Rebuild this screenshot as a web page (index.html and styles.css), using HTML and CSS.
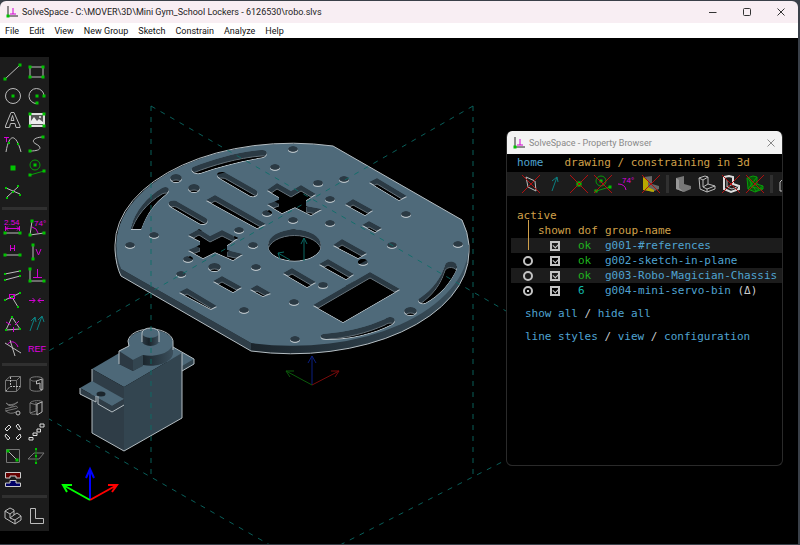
FILE: index.html
```html
<!DOCTYPE html>
<html lang="en">
<head>
  <meta charset="UTF-8">
  <title>SolveSpace</title>
  <link rel="stylesheet" href="styles.css">
</head>
<body>
  <div id="app">
    <header class="title-bar">
      <svg class="logo" viewBox="0 0 12 12"><path class="k" d="M2 0V10H12"/><path class="m" d="M4 8H10M7 8V2"/><path class="dot" d="M2 10h0"/></svg>
      <h1>SolveSpace - C:\MOVER\3D\Mini Gym_School Lockers - 6126530\robo.slvs</h1>
      <div class="window-buttons">
        <button title="Minimize"><svg viewBox="0 0 10 10"><path d="M1 5.500H8.500"/></svg></button>
        <button title="Maximize"><svg viewBox="0 0 10 10"><rect x="1.500" y="1.500" width="7" height="7" rx="1"/></svg></button>
        <button title="Close"><svg viewBox="0 0 10 10"><path d="M1.500 1.500L8.500 8.500M8.500 1.500L1.500 8.500"/></svg></button>
      </div>
    </header>

    <nav class="menu-bar">
      <button>File</button>
      <button>Edit</button>
      <button>View</button>
      <button>New Group</button>
      <button>Sketch</button>
      <button>Constrain</button>
      <button>Analyze</button>
      <button>Help</button>
    </nav>

    <main id="viewport">
      <svg id="scene" viewBox="0 38 798 506" preserveAspectRatio="xMinYMin slice">
        <defs>
          <linearGradient id="rim" gradientUnits="userSpaceOnUse" x1="251" y1="0" x2="470" y2="0">
            <stop offset="0" stop-color="#1b252c"/>
            <stop offset="1" stop-color="#3b505d"/>
          </linearGradient>
          <linearGradient id="horn">
            <stop offset="0" stop-color="#2c3a44"/>
            <stop offset=".4" stop-color="#19232a"/>
            <stop offset="1" stop-color="#3b4f5c"/>
          </linearGradient>
          <!-- every opening in the chassis plate -->
          <path id="openings" d="
            M193 167C213 159 238 152 261 150C268 149 269 155 263 157C240 161 220 166 200 173C194 174 189 170 193 167Z
            M131 227C135 211 147 197 162 188C168 185 172 190 166 194C154 203 147 213 141 229H131Z
            M445 265C446 260 458 260 457 268C450 283 440 295 425 303C419 304 416 300 420 298C433 289 441 278 445 265Z
            M323 334C347 332 367 327 385 319C392 314 399 320 392 324C374 333 350 339 326 339C320 339 319 335 323 334Z
            M218 177C214 172 223 171 226 173L256 190C261 195 253 198 249 195Z
            M170 206C165 201 174 199 178 202L206 218C211 222 203 226 199 223Z
            M206 200L215 195L266 224L257 228Z
            M188 235L199 229L210 236L222 230L238 238L227 245V250L243 254L233 260L215 252L203 258L188 250L200 245V241Z
            M267 190L277 183L291 191L301 185L316 194L306 200V206L322 209L311 215L295 207L282 213L267 204L279 200V197Z
            M369 182L377 178L407 196L399 200Z
            M345 204L353 199L373 210L365 215Z
            M362 225L369 221L382 228L375 232Z
            M333 245L342 239L367 253L358 258Z
            M319 264L328 259L354 274L346 279Z
            M283 273L292 268L316 282L307 287Z
            M213 281L222 276L242 287L233 292Z
            M250 289L257 285L271 293L263 296Z
            M179 292L187 288L217 306L211 309Z
            M313 305L370 272L400 289L343 322Z
            M268 245a26.500 15.500 0 0 1 53 0a26.500 15.500 0 0 1 -53 0Z
            M170 178a6 4 0 0 1 12 0a6 4 0 0 1 -12 0Z
            M188 188a6 4 0 0 1 12 0a6 4 0 0 1 -12 0Z
            M208 267a6.500 4 0 0 1 13 0a6.500 4 0 0 1 -13 0Z
            M404 311a6.500 4 0 0 1 13 0a6.500 4 0 0 1 -13 0Z
            M288 149a5 3 0 0 1 10 0a5 3 0 0 1 -10 0Z
            M270 167a5 3 0 0 1 10 0a5 3 0 0 1 -10 0Z
            M149 235a5 3 0 0 1 10 0a5 3 0 0 1 -10 0Z
            M125 245a5 3 0 0 1 10 0a5 3 0 0 1 -10 0Z
            M234 230a5 3 0 0 1 10 0a5 3 0 0 1 -10 0Z
            M248 245a5 3 0 0 1 10 0a5 3 0 0 1 -10 0Z
            M262 213a5 3 0 0 1 10 0a5 3 0 0 1 -10 0Z
            M288 220a5 3 0 0 1 10 0a5 3 0 0 1 -10 0Z
            M183 259a5 3 0 0 1 10 0a5 3 0 0 1 -10 0Z
            M313 183a5 3 0 0 1 10 0a5 3 0 0 1 -10 0Z
            M339 179a5 3 0 0 1 10 0a5 3 0 0 1 -10 0Z
            M325 199a5 3 0 0 1 10 0a5 3 0 0 1 -10 0Z
            M325 223a5 3 0 0 1 10 0a5 3 0 0 1 -10 0Z
            M401 214a5 3 0 0 1 10 0a5 3 0 0 1 -10 0Z
            M387 245a5 3 0 0 1 10 0a5 3 0 0 1 -10 0Z
            M453 244a5 3 0 0 1 10 0a5 3 0 0 1 -10 0Z
            M176 274a5 3 0 0 1 10 0a5 3 0 0 1 -10 0Z
            M251 267a5 3 0 0 1 10 0a5 3 0 0 1 -10 0Z
            M239 310a5 3 0 0 1 10 0a5 3 0 0 1 -10 0Z
            M289 302a5 3 0 0 1 10 0a5 3 0 0 1 -10 0Z
            M290 339a5 3 0 0 1 10 0a5 3 0 0 1 -10 0Z
            M358 262a5 3 0 0 1 10 0a5 3 0 0 1 -10 0Z
            M318 285a5 3 0 0 1 10 0a5 3 0 0 1 -10 0Z"/>
          <clipPath id="openings-clip"><use href="#openings"/></clipPath>
        </defs>

        <!-- chassis plate -->
        <path d="M115 245V252Q116 266 121 276L251 351V343L121 269Z" fill="#2f3e48"/>
        <path d="M251 343V351A177 102 0 0 0 469 252V245Z" fill="url(#rim)"/>
        <path class="edge" d="M115 245V250Q116 266 121 276L251 351A177 102 0 0 0 469 252V245"/>
        <path d="M121 269A177 102 0 0 1 333 146L462 220Q468 232 469 245A177 102 0 0 1 251 343Z" fill="#4f6a7a"/>
        <path class="edge" d="M115 245A177 102 0 0 1 333 146L462 220Q468 232 469 245"/>
        <use href="#openings" y="1" fill="#b9c2c7"/>
        <g clip-path="url(#openings-clip)">
          <use href="#openings" fill="#2b3a44"/>
          <use href="#openings" y="6" fill="#000" stroke="#66727a"/>
          <use href="#openings" y="7" fill="#000"/>
        </g>

        <!-- servo -->
        <path d="M173 347L194 359V364L182 371L160 358Z" fill="#4d6878"/>
        <path d="M194 359V364L182 371V366Z" fill="#33454f"/>
        <path class="edge" d="M173 347L194 359V364L182 371"/>
        <path d="M92 369L150 335L182 353L124 387Z" fill="#4d6878"/>
        <path d="M92 369L124 387V451L92 433Z" fill="#2f3d47"/>
        <path d="M124 387L182 353V418L124 451Z" fill="#334550"/>
        <path class="edge" d="M92 369V433L124 451L182 418V353"/>
        <path d="M80 388L92 381L124 399L112 406Z" fill="#4d6878"/>
        <path d="M80 388V394L112 412L124 405V399L112 406Z" fill="#2f3d47"/>
        <path class="edge" d="M80 388V394L96 402V396M98 396V404L112 412L124 405"/>
        <ellipse cx="101" cy="394" rx="4.500" ry="2.500" fill="#1b252c"/>
        <path d="M128 343A22.500 13 0 0 1 173 343V354A22.500 13 0 0 1 143 365L133 371L119 364V351L128 346Z" fill="url(#horn)"/>
        <path d="M119 351L133 360V371L119 364Z" fill="#2c3943"/>
        <path d="M133 360L143 355V366L133 371Z" fill="#334550"/>
        <path d="M128 343A22.500 13 0 1 1 143 355L133 360L119 351L129 346Z" fill="#4d6878"/>
        <path class="edge" d="M119 364V351L129 346L128 341A22.500 13 0 0 1 173 343V350"/>
        <path d="M142 333V341A8.500 5 0 0 0 159 341V333Z" fill="url(#horn)"/>
        <ellipse cx="150.500" cy="333" rx="8.500" ry="5" fill="#4d6878"/>
        <path class="edge" d="M142 342V333A8.500 5 0 0 1 159 333V342"/>

        <!-- reference planes -->
        <path class="plane" d="M151 106V480M473 106V480M151 106L506 311M473 106L0 379M0 391L270 545M340 545L506 460"/>
        <path d="M304 261V238M301 244L304 238L307 244M290 260L278 253L280 259M278 253L284 252" stroke="#0b6863" fill="none"/>

        <g class="axes dim">
          <path d="M312 385V356M308 363L312 356L316 363" stroke="#0a1f80"/>
          <path d="M312 385L339 371M331 371L339 371L335 377" stroke="#7a0b0b"/>
          <path d="M312 385L286 371M290 377L286 371L294 371" stroke="#0b5a0b"/>
        </g>
        <g class="axes">
          <path d="M90 500V469M86 478L90 469L94 478" stroke="#0000ff"/>
          <path d="M90 500L117 485M108 485L117 485L112 492" stroke="#ff0000"/>
          <path d="M90 500L63 485M67 492L63 485L72 485" stroke="#00ff00"/>
        </g>
      </svg>

      <aside class="toolbar">
        <div class="tools">
          <button title="Line"><svg viewBox="0 0 24 24"><path class="w" d="M4 19L19 5"/><path class="dot" d="M4 19h0M19 5h0"/></svg></button>
          <button title="Rectangle"><svg viewBox="0 0 24 24"><path class="w" d="M5 7H18V17H5Z"/><path class="dot" d="M5 7h0M18 7h0M18 17h0M5 17h0"/></svg></button>
          <button title="Circle"><svg viewBox="0 0 24 24"><circle class="w" cx="12" cy="12" r="7.500"/><path class="dot" d="M12 12h0"/></svg></button>
          <button title="Arc"><svg viewBox="0 0 24 24"><path class="w" d="M19 12A7.500 7.500 0 1 0 12 19.500"/><path class="dot" d="M12 12h0M19 12h0M12 19h0"/></svg></button>
          <button title="Text"><svg viewBox="0 0 24 24"><path class="w" d="M4.500 19.500V18L10 4.500H13L19 18V19.500H15L14 15.500H9.500L8.500 19.500ZM10 12.500L11.500 7.500L13 12.500Z"/></svg></button>
          <button title="Image"><svg viewBox="0 0 24 24"><rect x="5" y="6" width="14" height="12" fill="#555" stroke="#ddd" stroke-width="2"/><path d="M6 16V13L9 9L12 13L14 11L18 14V16Z" fill="#eee"/><circle cx="15" cy="9" r="1" fill="#eee"/><path class="dot" d="M5 6h0M19 6h0M19 18h0M5 18h0"/></svg></button>
          <button title="Tangent arc"><svg viewBox="0 0 24 24"><path class="m" d="M3 5.500H8M5.500 5V10"/><path class="w" d="M5 20C8 1 15 1 20 20"/><path class="dot small" d="M8 11h0M17 12h0"/></svg></button>
          <button title="Cubic spline"><svg viewBox="0 0 24 24"><path class="w" d="M18 5C10 5 5 9 11 12S17 19 5 19"/><path class="dot" d="M18 5h0M5 19h0"/></svg></button>
          <button title="Point"><svg viewBox="0 0 24 24"><path class="dot huge" d="M12 12h0"/></svg></button>
          <button title="Construction"><svg viewBox="0 0 24 24"><circle class="g" cx="10" cy="9" r="5"/><path class="g" d="M5 19L19 15"/><path class="dot" d="M10 9h0M5 19h0M19 15h0"/></svg></button>
          <button title="Split curves"><svg viewBox="0 0 24 24"><path class="w" d="M5 8L19 14M6 17L18 6"/><path class="dot small" d="M5 8h0M19 15h0M6 18h0M17 6h0M12 12h0"/></svg></button>
        </div>
        <div class="tools">
          <button title="Distance"><svg viewBox="0 0 24 24"><text x="3" y="9">2.54</text><path class="m" d="M4 12.500H19M4.500 10V15M18.500 10V15M7 10.500L5 12.500L7 14.500M16 10.500L18 12.500L16 14.500"/><path class="w" d="M4 17H19"/><path class="dot" d="M4 17h0M19 17h0"/></svg></button>
          <button title="Angle"><svg viewBox="0 0 24 24"><text x="9" y="10">74°</text><path class="m" d="M7 11Q12 12 13 17"/><path class="w" d="M7 5L5 19L19 17"/><path class="dot" d="M7 5h0M5 19h0M19 17h0"/></svg></button>
          <button title="Horizontal"><svg viewBox="0 0 24 24"><path class="m" d="M9.500 5V11M13.500 5V11M10 8.500H13"/><path class="w" d="M4 15H19"/><path class="dot" d="M4 15h0M19 15h0"/></svg></button>
          <button title="Vertical"><svg viewBox="0 0 24 24"><path class="m" d="M11 9L13.500 15L16 9"/><path class="w" d="M8 5V19"/><path class="dot" d="M8 5h0M8 19h0"/></svg></button>
          <button title="Parallel"><svg viewBox="0 0 24 24"><path class="w" d="M4 10L19 7M4 16L19 12"/><path class="dot small" d="M4 10h0M19 7h0M4 16h0M19 12h0"/></svg></button>
          <button title="Perpendicular"><svg viewBox="0 0 24 24"><path class="m" d="M8 13.500H17M12.500 13V5"/><path class="w" d="M5 5V17H19"/><path class="dot" d="M5 5h0M5 17h0M19 17h0"/></svg></button>
          <button title="Point on line"><svg viewBox="0 0 24 24"><path class="w" d="M4 12L19 5M11 9L17 19"/><rect class="m" x="8.500" y="6.500" width="5" height="4"/><path class="dot small" d="M4 12h0M19 5h0M11 9h0M17 19h0"/></svg></button>
          <button title="Symmetric"><svg viewBox="0 0 24 24"><path class="m" d="M4 12.500H10M7.500 10L10 12.500L7.500 15M19 12.500H13M15.500 10L13 12.500L15.500 15"/></svg></button>
          <button title="Equal"><svg viewBox="0 0 24 24"><path class="w" d="M11 5L5 18L19 17Z"/><path class="m" d="M5 10L10 13M14 13L18 9M12.500 15V20"/><path class="dot small" d="M11 5h0M5 18h0M19 17h0"/></svg></button>
          <button title="Same orientation"><svg viewBox="0 0 24 24"><path class="t" d="M5 19L10 5M6 9L10 5L11 10M12 18L17 4M13 8L17 4L19 10"/></svg></button>
          <button title="Other angle"><svg viewBox="0 0 24 24"><path class="m" d="M6 9C9 4 15 5 17 11"/><path class="w" d="M4 7L20 17M9 4L14 20"/></svg></button>
          <button title="Reference"><svg viewBox="0 0 24 24"><text class="ref" x="3" y="16">REF</text></svg></button>
        </div>
        <div class="tools">
          <button title="Extrude"><svg viewBox="0 0 24 24"><path class="d" d="M4.500 8.500H15.500V19.500H4.500ZM4.500 8.500L9 4.500H19.500L15.500 8.500M19.500 4.500V15L15.500 19.500"/><path class="w dash" d="M9.500 5V14.500H19M5 19L9 14.500"/></svg></button>
          <button title="Lathe"><svg viewBox="0 0 24 24"><path class="d" d="M5 7C5 4 18 4 18 7V17C18 20 5 20 5 17ZM5 7C7 10 10 9 12 9"/><path class="w" d="M11.500 9L17 7V18L15 17V11L11.500 12Z"/></svg></button>
          <button title="Helix"><svg viewBox="0 0 24 24"><path class="d" d="M5 7Q9 11 17 6M5 7Q7 10 11 10L17 6M4 13L15 10Q19 12 13 13L4 15M5 15Q9 19 15 16"/><circle class="w" cx="17" cy="17" r="2"/></svg></button>
          <button title="Revolve"><svg viewBox="0 0 24 24"><path class="d" d="M5 7C7 4 16 4 18 6M5 7V17C7 19 10 18 12 18M5 7L12 9M11 6V15L5 17"/><path class="w" d="M12 8L17 6V16L12 19Z"/></svg></button>
          <button title="Step rotating"><svg viewBox="0 0 24 24"><path class="b" d="M4 9L8 5L10 7L6 11ZM15 6L17 4L20 9L18 10ZM5 14L9 18L7 20L4 16ZM15 18L19 14L20 17L17 20Z"/></svg></button>
          <button title="Step translating"><svg viewBox="0 0 24 24"><path class="b" d="M4 17.500H8V20H4ZM8 13H12V15.500H8ZM12 9H15.500V12H12ZM15 4H19V7H15Z"/></svg></button>
          <button title="Sketch in workplane"><svg viewBox="0 0 24 24"><path class="d" d="M5.500 5.500H18.500V18.500H5.500Z"/><path class="w" d="M7 7L16 16"/><path class="dot" d="M7 7h0M16 16h0"/></svg></button>
          <button title="Sketch in 3d"><svg viewBox="0 0 24 24"><path class="d" d="M3 15L9 9H19L14 15Z"/><path class="g" d="M11 5V19"/><path class="dot small" d="M11 5h0M11 12h0M11 19h0"/></svg></button>
          <button title="Assemble"><svg viewBox="0 0 24 24"><path d="M4.500 4.500H19.500V10H15V8H9V10H4.500Z" fill="#600" stroke="#ccc"/><path d="M9 12.500H15V15H19.500V18.500H4.500V15H9Z" fill="#006" stroke="#ccc"/></svg></button>
        </div>
        <div class="tools">
          <button title="Nearest isometric view"><svg viewBox="0 0 24 24"><path class="w" d="M4 7L9 4L13 6V11L16 9L20 12V16L14 20L4 14ZM4 7L9 10L13 7M9 10V14L14 16V20M14 16L20 12M9 14L13 11"/></svg></button>
          <button title="View onto workplane"><svg viewBox="0 0 24 24"><path class="w" d="M5.500 4.500H10.500V14.500H18.500V19.500H5.500Z"/></svg></button>
        </div>
      </aside>

      <section class="browser">
        <header class="browser-title">
          <svg class="logo" viewBox="0 0 12 12"><path class="k" d="M2 0V10H12"/><path class="m" d="M4 8H10M7 8V2"/><path class="dot" d="M2 10h0"/></svg>
          <h2>SolveSpace - Property Browser</h2>
          <button title="Close"><svg viewBox="0 0 10 10"><path d="M1.500 1.500L8.500 8.500M8.500 1.500L1.500 8.500"/></svg></button>
        </header>
        <div class="crumbs"><a href="#home">home</a><span>drawing / constraining in 3d</span></div>

        <div class="toggles">
          <button title="Workplanes"><svg viewBox="0 0 24 24"><path class="w" d="M7 5L16 9L17 19L9 15Z"/><path class="x" d="M3 3L21 21M21 3L3 21"/></svg></button>
          <button title="Normals"><svg viewBox="0 0 24 24"><path class="t" d="M9 19L14 5M9 9L14 5L15 10"/></svg></button>
          <button title="Points"><svg viewBox="0 0 24 24"><path class="dot huge" d="M12 12h0"/><path class="x" d="M3 3L21 21M21 3L3 21"/></svg></button>
          <button title="Construction"><svg viewBox="0 0 24 24"><circle class="g" cx="10" cy="9" r="5"/><path class="g" d="M5 19L19 15"/><path class="dot" d="M10 9h0M5 19h0M19 15h0"/><path class="x" d="M3 3L21 21M21 3L3 21"/></svg></button>
          <button title="Constraints"><svg viewBox="0 0 24 24"><text x="7" y="11">74°</text><path class="m" d="M3 12Q10 12 11 18"/></svg></button>
          <button title="Faces"><svg viewBox="0 0 24 24"><path d="M5 5L13 4V12L20 14V17L13 20L5 17Z" fill="#666"/><path d="M4 5L9 8V15L15 18V20L4 18Z" fill="#b8a800"/><path class="x" d="M3 3L21 21M21 3L3 21"/></svg></button>
          <hr>
          <button title="Shaded"><svg viewBox="0 0 24 24"><path d="M5 6L13 4V12L20 14V17L13 20L5 17Z" fill="#777"/><path d="M5 6L8 8V16L13 20L5 17Z" fill="#999"/></svg></button>
          <button title="Edges"><svg viewBox="0 0 24 24"><path class="w" d="M4 6L10 4L13 5V12L20 14V17L12 20L5 17ZM4 6L8 8V15L12 17V20M8 8L13 5M12 17L20 14M8 15L13 12"/></svg></button>
          <button title="Outlines"><svg viewBox="0 0 24 24"><path class="b thick" d="M5 5L10 4L14 5V12L20 14V17L12 20L5 17Z"/><path class="w" d="M8 8V15L13 17L20 14M8 15L14 12"/><path class="x" d="M3 3L21 21M21 3L3 21"/></svg></button>
          <button title="Mesh"><svg viewBox="0 0 24 24"><path d="M4 6L10 4L14 5V12L20 14V17L12 20L5 17Z" fill="#075807"/><path class="g" d="M4 6L10 4L14 5V12L20 14V17L12 20L5 17ZM5 6L13 19M14 5L5 17M8 8V15L20 17M8 15L14 12M12 20L20 14"/><path class="x" d="M3 3L21 21M21 3L3 21"/></svg></button>
          <hr>
          <button title="Occluded lines"><svg viewBox="0 0 24 24"><path class="w" d="M5 10L10 5H18V15L14 19H5Z"/></svg></button>
        </div>

        <table class="groups">
          <colgroup><col class="c-active"><col class="c-shown"><col class="c-dof"><col></colgroup>
          <thead>
            <tr><th class="active" colspan="4">active</th></tr>
            <tr><th></th><th>shown</th><th>dof</th><th>group-name</th></tr>
          </thead>
          <tbody>
            <tr><td></td><td><input type="checkbox" aria-label="Show g001" checked></td><td class="ok">ok</td><td><a href="#g001">g001-#references</a></td></tr>
            <tr><td><input type="radio" name="active" aria-label="Activate g002"></td><td><input type="checkbox" aria-label="Show g002" checked></td><td class="ok">ok</td><td><a href="#g002">g002-sketch-in-plane</a></td></tr>
            <tr><td><input type="radio" name="active" aria-label="Activate g003"></td><td><input type="checkbox" aria-label="Show g003" checked></td><td class="ok">ok</td><td><a href="#g003">g003-Robo-Magician-Chassis</a></td></tr>
            <tr><td><input type="radio" name="active" aria-label="Activate g004" checked></td><td><input type="checkbox" aria-label="Show g004" checked></td><td class="free">6</td><td><a href="#g004">g004-mini-servo-bin</a> (Δ)</td></tr>
          </tbody>
        </table>

        <p><a href="#show-all">show all</a> / <a href="#hide-all">hide all</a></p>
        <p><a href="#styles">line styles</a> / <a href="#view">view</a> / <a href="#config">configuration</a></p>
      </section>
    </main>
  </div>
</body>
</html>
```
FILE: styles.css
```css
* {
  box-sizing: border-box;
}
body {
  margin: 0;
  background: #3a4049;
  font-family: Roboto, "Noto Sans", sans-serif;
  font-size: 9px;
}
h1, h2, p {
  margin: 0;
  font-size: inherit;
  font-weight: normal;
}
button {
  margin: 0;
  padding: 0;
  border: 0;
  background: none;
  color: inherit;
  font: inherit;
}
a {
  color: #4fa3d1;
  text-decoration: none;
}
svg {
  display: block;
  fill: none;
}

#app {
  display: flex;
  flex-direction: column;
  min-height: 100vh;
  border: solid #3a4049;
  border-width: 1px 2px 1px 0;
}

/* window chrome */
.title-bar {
  display: flex;
  align-items: center;
  height: 22px;
  padding-left: 6px;
  background: #f8eef3;
  color: #222;
  border-radius: 6px 6px 0 0;
}
.logo {
  width: 12px;
  height: 12px;
  margin-right: 4px;
}
.window-buttons {
  display: flex;
  margin-left: auto;
}
.window-buttons button {
  width: 34px;
  height: 22px;
}
.window-buttons svg,
.browser-title button svg {
  width: 10px;
  height: 10px;
  margin: auto;
  stroke: #333;
}
.menu-bar {
  display: flex;
  gap: 10px;
  height: 15px;
  padding-left: 5px;
  background: #fff;
  color: #111;
}

#viewport {
  position: relative;
  display: flex;
  flex: 1;
  align-items: flex-start;
  background: #000;
}
#scene {
  position: absolute;
  width: 100%;
  height: 100%;
}
.edge {
  stroke: #b4bdc2;
}
.plane {
  stroke: #0a6f68;
  stroke-dasharray: 5 6;
  opacity: .85;
}
.axes {
  stroke-width: 2;
}
.axes.dim {
  stroke-width: 1;
}

/* icon strokes */
.w { stroke: #bbb; }
.d { stroke: #777; }
.b { stroke: #ddd; }
.k { stroke: #222; }
.m { stroke: #d400d4; }
.g { stroke: #0a9a0a; }
.t { stroke: #0b7f80; }
.x { stroke: #b01010; }
.thick { stroke-width: 2; }
.dash { stroke-dasharray: 2 1; }
.dot {
  stroke: #00c400;
  stroke-width: 3;
  stroke-linecap: square;
}
.dot.small { stroke-width: 2; }
.dot.huge { stroke-width: 5; }
button text {
  fill: #e000e0;
  font: 8px "Liberation Sans", sans-serif;
}
button text.ref {
  font-size: 9px;
}

.toolbar {
  position: relative;
  display: flex;
  flex-direction: column;
  gap: 12px;
  width: 49px;
  margin-top: 19px;
  padding: 3px 0 3px 1px;
  background: #1c1c1c;
}
.tools {
  position: relative;
  display: grid;
  grid-template-columns: 24px 24px;
  grid-auto-rows: 24px;
}
.tools + .tools::before {
  content: "";
  position: absolute;
  top: -9px;
  left: 1px;
  right: 2px;
  height: 3px;
  background: #303030;
}
.tools svg,
.toggles svg {
  width: 24px;
  height: 24px;
}

/* floating property browser */
.browser {
  position: absolute;
  top: 93px;
  right: 15px;
  width: 277px;
  min-height: 335px;
  overflow: hidden;
  border: 1px solid #2a2a2a;
  border-top: 0;
  border-radius: 6px;
  background: #000;
  color: #ccc;
  font: 11px/15px "DejaVu Sans Mono", monospace;
}
.browser-title {
  display: flex;
  align-items: center;
  height: 23px;
  padding: 0 6px;
  background: #f3f3f3;
  color: #888;
  font: 9px Roboto, "Noto Sans", sans-serif;
}
.browser-title button {
  margin-left: auto;
}
.browser-title button svg {
  stroke: #888;
}
.crumbs {
  display: flex;
  gap: 21px;
  height: 18px;
  padding: 1px 10px;
  color: #d0a04a;
}
.toggles {
  display: flex;
  align-items: center;
  height: 24px;
  padding-left: 12px;
  background: #1c1c1c;
}
.toggles button {
  flex: none;
}
.toggles hr {
  flex: none;
  width: 3px;
  height: 18px;
  margin: 0 2px 0 3px;
  border: 0;
  background: #303030;
}

.groups {
  width: 271px;
  margin: 12px 0 0 4px;
  border-collapse: collapse;
  table-layout: fixed;
  white-space: nowrap;
}
.groups th,
.groups td {
  height: 15px;
  padding: 0;
  line-height: 15px;
  text-align: left;
  font-weight: normal;
}
.groups th {
  color: #d0a04a;
}
.groups .active {
  position: relative;
  padding-left: 6px;
}
.active::after {
  content: "";
  position: absolute;
  top: 12px;
  left: 17px;
  width: 1px;
  height: 30px;
  background: #d0a04a;
}
.c-active { width: 27px; }
.c-shown { width: 40px; }
.c-dof { width: 27px; }
.groups tbody tr:nth-child(odd) {
  background: #1c1c1c;
}
.ok { color: #1fb41f; }
.free { color: #12b5a8; }

.groups input {
  appearance: none;
  position: relative;
  display: block;
  width: 10px;
  height: 10px;
  margin: 0 0 0 12px;
  border: 2px solid #c4c4c4;
}
.groups input[type=radio] {
  border-radius: 50%;
}
.groups input[type=radio]:checked::after {
  content: "";
  position: absolute;
  top: 2px;
  left: 2px;
  width: 2px;
  height: 2px;
  background: #ccc;
}
.groups input[type=checkbox]:checked::after {
  content: "";
  position: absolute;
  top: 0;
  left: 1px;
  width: 5px;
  height: 3px;
  border: solid #ccc;
  border-width: 0 0 1px 1px;
  transform: rotate(-45deg);
}
.browser p {
  margin: 8px 0 0 18px;
}
```
